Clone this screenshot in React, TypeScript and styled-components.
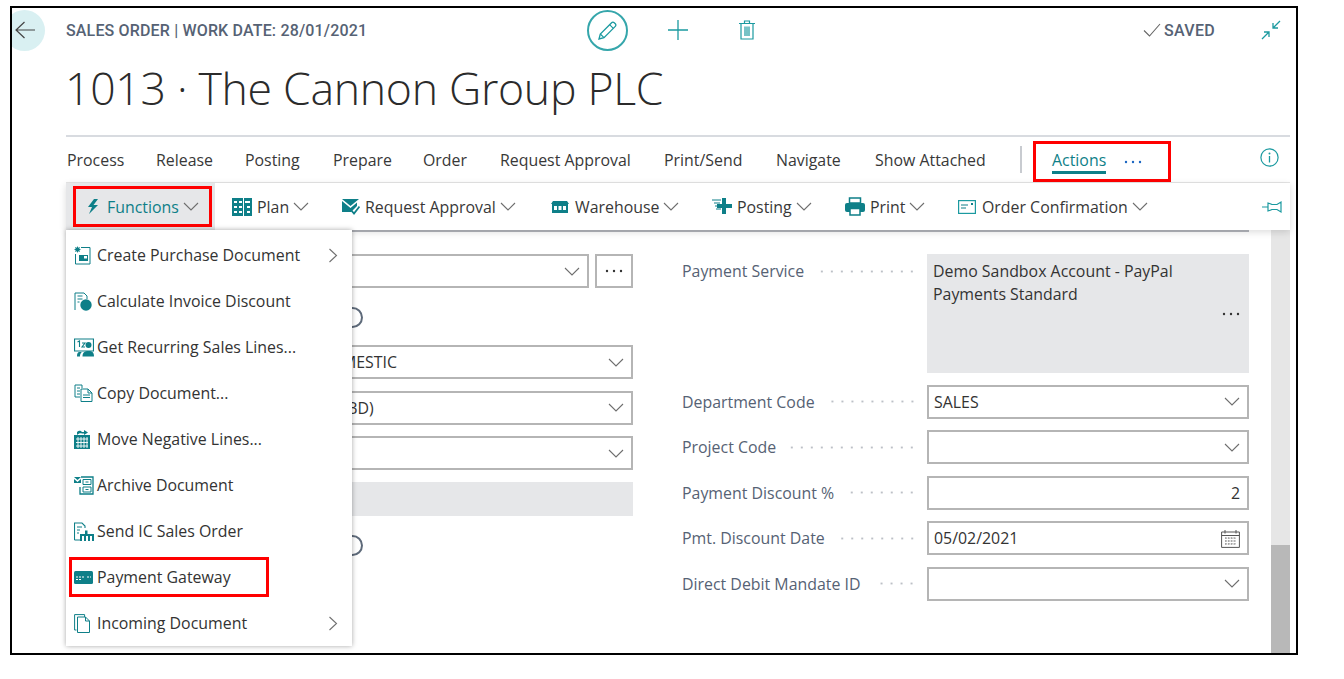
import * as React from 'react'
import styled, { createGlobalStyle } from 'styled-components'

const teal = '#0e7f88'
const lightTeal = '#1b9aa0'

const GlobalStyle = createGlobalStyle`
  html, body {
    margin: 0;
    padding: 0;
    background: #fff;
    font-family: "Open Sans", "Noto Sans", Arial, sans-serif;
    color: #333;
  }
  * { box-sizing: border-box; }
`

const Frame = styled.div`
  width: 1288px;
  height: 649px;
  margin: 6px 0 0 10px;
  border: 2px solid #000;
  overflow: hidden;
  display: flex;
  flex-direction: column;
`

const TopRow = styled.div`
  display: flex;
  align-items: center;
  height: 44px;
  flex: none;
  padding-right: 15px;
`

const BackButton = styled.div`
  width: 41px;
  height: 41px;
  border-radius: 50%;
  background: #d9f0f2;
  margin-left: -8px;
  margin-right: 21px;
  display: flex;
  align-items: center;
  justify-content: center;
  flex: none;
`

const Caption = styled.div`
  width: 300px;
  font-family: Roboto, "Open Sans", sans-serif;
  font-weight: 500;
  font-size: 16px;
  letter-spacing: 0.16px;
  color: #566274;
  white-space: nowrap;
`

const ActionGroup = styled.div`
  display: flex;
  align-items: center;
  margin-left: 221px;
`

const EditCircle = styled.div`
  width: 41px;
  height: 41px;
  border-radius: 50%;
  border: 2px solid #35a6ab;
  display: flex;
  align-items: center;
  justify-content: center;
  margin-right: 40px;
`

const TrashSlot = styled.div`
  display: flex;
  margin-left: 51px;
`

const SavedGroup = styled.div`
  display: flex;
  align-items: center;
  margin-left: auto;
  gap: 3px;
  color: #566274;
  font-family: Roboto, "Open Sans", sans-serif;
  font-weight: 500;
  font-size: 16px;
  letter-spacing: 0.3px;
`

const CheckSlot = styled.div`
  display: flex;
`

const CollapseSlot = styled.div`
  display: flex;
  margin-left: 43px;
`

const Title = styled.h1`
  height: 83px;
  flex: none;
  margin: 0;
  padding: 0 0 12px 53px;
  display: flex;
  align-items: center;
  font-weight: 300;
  font-size: 44.6px;
  letter-spacing: -0.3px;
  color: #2b2b2b;
  white-space: nowrap;
`

const Lower = styled.div`
  flex: 1;
  min-height: 0;
  display: flex;
  flex-direction: column;
  margin-left: 54px;
  margin-right: 6px;
`

const TabBar = styled.div`
  height: 48px;
  flex: none;
  border-top: 2px solid #d8dbe0;
  border-bottom: 1px solid #e6e6e6;
  display: flex;
  align-items: center;
  padding-left: 1px;
  font-size: 15.9px;
`

const Tab = styled.span<{ $width: number }>`
  width: ${p => p.$width}px;
  flex: none;
  white-space: nowrap;
  color: #383838;
`

const TabDivider = styled.div`
  width: 2px;
  height: 27px;
  background: #c8cbd0;
  flex: none;
`

const ActionsBox = styled.div`
  width: 138px;
  height: 41px;
  margin-left: 11px;
  align-self: flex-end;
  border: 3px solid #f00;
  display: flex;
  align-items: center;
  padding-left: 16px;
  flex: none;
`

const ActionsLabel = styled.span`
  color: ${teal};
  border-bottom: 3px solid ${teal};
  line-height: 21px;
  padding-top: 1px;
  margin-right: 18px;
`

const InfoSlot = styled.div`
  margin-left: auto;
  margin-right: 11px;
  margin-bottom: 4px;
  display: flex;
`

const Toolbar = styled.div`
  height: 47px;
  flex: none;
  background: #fff;
  position: relative;
  z-index: 2;
  box-shadow: 0 2px 7px rgba(0, 0, 0, 0.14);
  display: flex;
  align-items: center;
  font-size: 15.9px;
`

const FunctionsButton = styled.div`
  position: relative;
  width: 149px;
  height: 47px;
  margin-right: 17px;
  padding-left: 21px;
  background: #e6e7e9;
  display: flex;
  align-items: center;
  color: ${teal};
  flex: none;
`

const RedBox = styled.div`
  position: absolute;
  left: 7px;
  top: 3px;
  width: 139px;
  height: 41px;
  border: 3px solid #f00;
`

const ToolItem = styled.div<{ $width?: number }>`
  display: flex;
  align-items: center;
  width: ${p => (p.$width ? `${p.$width}px` : 'auto')};
  white-space: nowrap;
  color: #383838;
  flex: none;
`

const ToolLabel = styled.span<{ $iconGap: number }>`
  margin-left: ${p => p.$iconGap}px;
  margin-right: 4px;
`

const PinSlot = styled.div`
  margin-left: auto;
  margin-right: 8px;
  display: flex;
`

const Body = styled.div`
  position: relative;
  flex: 1;
  min-height: 0;
  display: flex;
`

const FormArea = styled.div`
  width: 1183px;
  flex: none;
  border-top: 2px solid #b4b6bc;
  padding-top: 22px;
  display: grid;
  grid-template-columns: 567px 567px;
  column-gap: 49px;
  align-items: start;
`

const FormColumn = styled.div`
  display: flex;
  flex-direction: column;
  gap: 11.5px;
`

const Row = styled.div<{ $tall?: boolean }>`
  display: grid;
  grid-template-columns: 245px 322px;
  align-items: ${p => (p.$tall ? 'start' : 'center')};
  min-height: 34px;
`

const Label = styled.div`
  display: flex;
  align-items: center;
  height: 34px;
  padding-right: 10px;
  font-size: 15.9px;
  color: #566274;
  white-space: nowrap;
`

const Leader = styled.span`
  flex: 1;
  height: 3px;
  margin-left: 14px;
  background-image: radial-gradient(circle, #bcc0c6 1px, transparent 1.2px);
  background-size: 10px 3px;
  background-position: right center;
`

const Field = styled.div<{ $align?: string }>`
  height: 34px;
  border: 2px solid #b5b5b5;
  display: flex;
  align-items: center;
  justify-content: ${p => p.$align ?? 'space-between'};
  padding: 0 7px 0 5px;
  font-size: 15.9px;
  color: #333;
  background: #fff;
`

const FieldWithButton = styled.div`
  display: grid;
  grid-template-columns: 1fr 38px;
  column-gap: 6px;
`

const EllipsisButton = styled.div`
  height: 34px;
  border: 2px solid #b5b5b5;
  display: flex;
  align-items: center;
  justify-content: center;
`

const ReadOnly = styled.div<{ $tall?: boolean }>`
  height: ${p => (p.$tall ? 119 : 34)}px;
  background: #e6e7e9;
  padding: 6px 6px;
  position: relative;
  font-size: 15.9px;
  line-height: 23px;
  color: #333;
`

const ReadOnlyDots = styled.div`
  position: absolute;
  right: 9px;
  top: 58px;
  display: flex;
`

const ToggleRow = styled.div`
  height: 34px;
  display: flex;
  align-items: center;
`

const Toggle = styled.div`
  width: 21px;
  height: 21px;
  margin-top: 2px;
  border-radius: 50%;
  border: 2px solid #5e6a7a;
  margin-left: 31px;
`

const Scrollbar = styled.div`
  width: 19px;
  flex: none;
  margin-left: 22px;
  background: #e6e6e6;
  display: flex;
  flex-direction: column;
  justify-content: flex-end;
`

const ScrollThumb = styled.div`
  height: 108px;
  background: #b8b8b8;
`

const Menu = styled.div`
  position: absolute;
  left: 0;
  top: 0;
  z-index: 3;
  width: 286px;
  height: 416px;
  padding-top: 2px;
  background: #fff;
  box-shadow: 0 0 5px rgba(0, 0, 0, 0.35);
`

const MenuItem = styled.div`
  position: relative;
  height: 46px;
  padding-left: 8px;
  display: flex;
  align-items: center;
  font-size: 15.9px;
  color: #333;
  white-space: nowrap;
`

const MenuIconSlot = styled.div`
  width: 23px;
  flex: none;
  display: flex;
`

const MenuArrow = styled.div`
  margin-left: auto;
  margin-right: 14px;
  display: flex;
`

const MenuRedBox = styled.div`
  position: absolute;
  left: 3px;
  top: 3px;
  width: 200px;
  height: 40px;
  border: 3px solid #f00;
`

const Svg = ({ w, h, vb, children }: { w: number; h: number; vb?: string; children: React.ReactNode }) => (
  <svg width={w} height={h} viewBox={vb ?? `0 0 ${w} ${h}`} fill="none">{children}</svg>
)

const Chevron = ({ size = 16, color = '#6e6e6e' }: { size?: number; color?: string }) => (
  <Svg w={size} h={9} vb="0 0 16 9">
    <path d="M1 1l7 7 7-7" stroke={color} strokeWidth="1.1" />
  </Svg>
)

const ArrowRight = () => (
  <Svg w={10} h={15}>
    <path d="M1.5 1l7 6.5-7 6.5" stroke="#707070" strokeWidth="1.1" />
  </Svg>
)

const Dots = ({ color = '#333' }: { color?: string }) => (
  <Svg w={18} h={4}>
    <circle cx="2" cy="2" r="1.2" fill={color} />
    <circle cx="9" cy="2" r="1.2" fill={color} />
    <circle cx="16" cy="2" r="1.2" fill={color} />
  </Svg>
)

const BackArrow = () => (
  <Svg w={20} h={18}>
    <path d="M20 9H1M9.5 1L1 9l8.5 8" stroke="#444" strokeWidth="1.2" />
  </Svg>
)

const PencilIcon = () => (
  <Svg w={21} h={21}>
    <path d="M2 19l1.3-5L14.6 2.7a1.8 1.8 0 012.6 0l1.1 1.1a1.8 1.8 0 010 2.6L7 17.7 2 19z" stroke={lightTeal} strokeWidth="1.3" />
    <path d="M12.6 4.7l3.7 3.7M3.3 14l3.7 3.7" stroke={lightTeal} strokeWidth="1.2" />
  </Svg>
)

const PlusIcon = () => (
  <Svg w={20} h={20}>
    <path d="M10 0v20M0 10h20" stroke={lightTeal} strokeWidth="1.3" />
  </Svg>
)

const TrashIcon = () => (
  <Svg w={16} h={20}>
    <path d="M0 3.5h16M5.5 3.5V1h5v2.5M2 3.5v15.5h12V3.5M6 6.5v9.5M8 6.5v9.5M10 6.5v9.5" stroke={lightTeal} strokeWidth="1.2" />
  </Svg>
)

const CheckIcon = () => (
  <Svg w={18} h={14}>
    <path d="M1 7.5l5.5 5.5L17 1" stroke="#666" strokeWidth="1.1" />
  </Svg>
)

const CollapseIcon = () => (
  <Svg w={20} h={20}>
    <path d="M19 1l-7 7M12 3v5h5M1 19l7-7M3 12h5v5" stroke={lightTeal} strokeWidth="1.3" />
  </Svg>
)

const InfoIcon = () => (
  <Svg w={19} h={19}>
    <circle cx="9.5" cy="9.5" r="8.6" stroke={lightTeal} strokeWidth="1.2" />
    <path d="M9.5 8v6.5" stroke={lightTeal} strokeWidth="1.3" />
    <circle cx="9.5" cy="5.5" r="1" fill={lightTeal} />
  </Svg>
)

const PinIcon = () => (
  <Svg w={20} h={14}>
    <path d="M0 7h6M6 3l4 1.5h5L19 2v10l-4-2.5h-5L6 11z" stroke={lightTeal} strokeWidth="1.2" />
  </Svg>
)

const BoltIcon = () => (
  <Svg w={12} h={15}>
    <path d="M7 0L1 8h4l-3 7 9-9H6.5L11 0z" fill={teal} />
  </Svg>
)

const PlanIcon = () => (
  <Svg w={20} h={18}>
    <rect width="20" height="18" fill={teal} />
    <path d="M2 3h3v2H2zM7 3h3v2H7zM13 3h5v2h-5zM2 8h3v2H2zM7 8h3v2H7zM15 8h3v2h-3zM2 13h3v2H2zM7 13h3v2H7zM15 13h3v2h-3z" fill="#fff" />
    <path d="M11.5 0v18" stroke="#fff" />
  </Svg>
)

const ApprovalIcon = () => (
  <Svg w={18} h={16}>
    <path d="M0 0h17L8.500 7z" fill={teal} />
    <path d="M0 2l8.500 7L15 3.500V7l-6 6H0z" fill={teal} />
    <path d="M9 11l3 3.500 5.500-7" stroke={teal} strokeWidth="1.8" />
  </Svg>
)

const WarehouseIcon = () => (
  <Svg w={18} h={12}>
    <path d="M2 0h14l2 3H0z" fill={teal} />
    <path d="M1 3h16v9H1z" fill={teal} />
    <path d="M3 5h3v4H3zM7.5 5h3v4h-3zM12 5h3v4h-3z" fill="#fff" />
  </Svg>
)

const PostingIcon = () => (
  <Svg w={20} h={17}>
    <path d="M10 0h4v6h6v4h-6v6h-4v-6H5V6h5z" fill={teal} />
    <path d="M0 2h9M2 5h6M3 8h2M4 11h5" stroke={teal} />
  </Svg>
)

const PrintIcon = () => (
  <Svg w={20} h={19}>
    <path d="M4.5 1h11v5h-11z" stroke={teal} strokeWidth="1.5" />
    <rect y="6" width="20" height="9" rx="2" fill={teal} />
    <path d="M5 11.5h10V18H5z" fill="#fff" stroke={teal} strokeWidth="1.5" />
  </Svg>
)

const ConfirmIcon = () => (
  <Svg w={18} h={14}>
    <rect x=".6" y=".6" width="16.8" height="12.8" stroke={lightTeal} strokeWidth="1.2" />
    <path d="M3 5h7M3 8h5" stroke={teal} />
    <rect x="13" y="3" width="2" height="2" fill={teal} />
  </Svg>
)

const CalendarIcon = () => (
  <Svg w={19} h={19}>
    <path d="M.6 3h17.8v15.4H.6zM.6 6.5h17.8M4 1v3.5M15 1v3.5" stroke="#555" strokeWidth="1" />
    <path d="M4 9h11M4 12h11M4 15h11M5 8.5v8M8 8.5v8M11 8.5v8M14 8.5v8" stroke="#777" strokeWidth=".9" strokeDasharray="1.4 1.4" />
  </Svg>
)

const MenuCreate = () => (
  <Svg w={17} h={19}>
    <path d="M7 1.5h9V18H1.500V8" stroke={teal} />
    <path d="M3.500 0l.7 1.700 1.800-.7-.7 1.800L7 3.500l-1.700.7.7 1.800-1.800-.7L3.500 7l-.7-1.700-1.800.7.7-1.800L0 3.500l1.700-.7L1 1l1.800.7z" fill={teal} />
    <path d="M5 9h9v6H5z" fill={teal} />
    <path d="M10 10h3v2.500h-3z" fill="#fff" />
  </Svg>
)

const MenuCalc = () => (
  <Svg w={18} h={19}>
    <path d="M1 18V1h9l3 3v3" stroke={teal} />
    <path d="M3.500 4h5M3.500 7h5M3.500 10h2" stroke={teal} />
    <circle cx="12" cy="13" r="5.700" fill={teal} />
  </Svg>
)

const MenuRecurring = () => (
  <Svg w={20} h={19}>
    <path d="M.5 1h19v12H.500z" stroke={teal} strokeWidth="1.2" />
    <path d="M3.500 4l2-1v6M8 5h3L8 9h3" stroke={teal} strokeWidth="1.100" />
    <circle cx="14.500" cy="7" r="3" fill={teal} />
    <path d="M8.500 18.500c0-4 2-5.500 6-5.500s5.500 1.500 5.500 5.500zM6 18.500c0-2 .5-3.500 2-4.500h-3c-1.500.5-2 2-2 4.500z" fill={teal} />
  </Svg>
)

const MenuCopy = () => (
  <Svg w={19} h={18}>
    <path d="M8 4V1H1v12h5" stroke={teal} />
    <path d="M7 5h7l4 4v8.500H7zM14 5v4h4M9 11h7M9 13.500h7M3 4h3M3 7h3M3 10h3" stroke={teal} />
  </Svg>
)

const MenuMove = () => (
  <Svg w={16} h={19}>
    <path d="M3 2c2-2 4-1 5 0h2V0l4 2.500-4 2.500V3.500H8C6.500 3 5 3 3 5z" fill={teal} />
    <rect y="5" width="16" height="14" fill={teal} />
    <path d="M2 9h12M2 12.500h12M2 16h12M4 7v11M7 7v11M10 7v11M13 7v11" stroke="#fff" strokeWidth=".9" />
  </Svg>
)

const MenuArchive = () => (
  <Svg w={20} h={19}>
    <path d="M0 1h7L3.500 4z" fill={teal} />
    <path d="M0 3l3.500 3L7 3v4H0z" fill={teal} />
    <path d="M7 1h12v17H6v-7" stroke={teal} strokeWidth="1.300" />
    <path d="M9 3.500h8v5H9zM9 11h8v5H9z" stroke={teal} />
    <path d="M11.500 6h3M11.500 13.500h3" stroke={teal} />
  </Svg>
)

const MenuSend = () => (
  <Svg w={20} h={19}>
    <path d="M.5 18V1H8l3 3v2M.5 18h6" stroke={teal} strokeWidth="1.100" />
    <path d="M3 5h5M3 8h3M3 11h2" stroke={teal} />
    <path d="M6 19v-7h5V8.500h2.500V12H20v7z" fill={teal} />
    <path d="M8 14h2v5H8zM12 14h2v5h-2zM16 14h2v5h-2z" fill="#fff" />
  </Svg>
)

const MenuCard = () => (
  <Svg w={19} h={13}>
    <rect width="19" height="13" rx="1.500" fill={teal} />
    <path d="M2 6h9M13 6h4" stroke="#fff" strokeDasharray="2 1" />
    <path d="M2 8.500h6" stroke="#fff" strokeDasharray="2 1" />
  </Svg>
)

const MenuIncoming = () => (
  <Svg w={16} h={19}>
    <path d="M2.500 16H.6V.6h10V3" stroke={teal} />
    <path d="M3.500 3h8l4 4v11.500h-12zM11.500 3v4h4" stroke={teal} />
  </Svg>
)

const tabs = [
  { name: 'Process', width: 89 },
  { name: 'Release', width: 89 },
  { name: 'Posting', width: 88 },
  { name: 'Prepare', width: 90 },
  { name: 'Order', width: 77 },
  { name: 'Request Approval', width: 164 },
  { name: 'Print/Send', width: 112 },
  { name: 'Navigate', width: 99 },
  { name: 'Show Attached', width: 145 },
]

const tools = [
  { name: 'Plan', icon: <PlanIcon />, gap: 5, width: 110 },
  { name: 'Request Approval', icon: <ApprovalIcon />, gap: 5, width: 209 },
  { name: 'Warehouse', icon: <WarehouseIcon />, gap: 6, width: 161 },
  { name: 'Posting', icon: <PostingIcon />, gap: 5, width: 133 },
  { name: 'Print', icon: <PrintIcon />, gap: 5, width: 113 },
  { name: 'Order Confirmation', icon: <ConfirmIcon />, gap: 6 },
]

const menuItems = [
  { name: 'Create Purchase Document', icon: <MenuCreate />, sub: true },
  { name: 'Calculate Invoice Discount', icon: <MenuCalc /> },
  { name: 'Get Recurring Sales Lines...', icon: <MenuRecurring /> },
  { name: 'Copy Document...', icon: <MenuCopy /> },
  { name: 'Move Negative Lines...', icon: <MenuMove /> },
  { name: 'Archive Document', icon: <MenuArchive /> },
  { name: 'Send IC Sales Order', icon: <MenuSend /> },
  { name: 'Payment Gateway', icon: <MenuCard />, marked: true },
  { name: 'Incoming Document', icon: <MenuIncoming />, sub: true },
]

const FieldRow = ({ label, children }: { label: string; children: React.ReactNode }) => (
  <Row>
    <Label>{label}<Leader /></Label>
    {children}
  </Row>
)

const App = () => (
  <>
    <GlobalStyle />
    <Frame>
      <TopRow>
        <BackButton><BackArrow /></BackButton>
        <Caption>SALES ORDER | WORK DATE: 28/01/2021</Caption>
        <ActionGroup>
          <EditCircle><PencilIcon /></EditCircle>
          <PlusIcon />
          <TrashSlot><TrashIcon /></TrashSlot>
        </ActionGroup>
        <SavedGroup>
          <CheckSlot><CheckIcon /></CheckSlot>
          SAVED
          <CollapseSlot><CollapseIcon /></CollapseSlot>
        </SavedGroup>
      </TopRow>
      <Title>1013 · The Cannon Group PLC</Title>
      <Lower>
        <TabBar>
          {tabs.map(t => <Tab key={t.name} $width={t.width}>{t.name}</Tab>)}
          <TabDivider />
          <ActionsBox>
            <ActionsLabel>Actions</ActionsLabel>
            <Dots color="#1a66c2" />
          </ActionsBox>
          <InfoSlot><InfoIcon /></InfoSlot>
        </TabBar>
        <Toolbar>
          <FunctionsButton>
            <BoltIcon />
            <ToolLabel $iconGap={8}>Functions</ToolLabel>
            <Chevron />
            <RedBox />
          </FunctionsButton>
          {tools.map(t => (
            <ToolItem key={t.name} $width={t.width}>
              {t.icon}
              <ToolLabel $iconGap={t.gap}>{t.name}</ToolLabel>
              <Chevron />
            </ToolItem>
          ))}
          <PinSlot><PinIcon /></PinSlot>
        </Toolbar>
        <Body>
          <FormArea>
            <FormColumn>
              <Row>
                <Label />
                <FieldWithButton>
                  <Field $align="flex-end"><Chevron /></Field>
                  <EllipsisButton><Dots /></EllipsisButton>
                </FieldWithButton>
              </Row>
              <Row><Label /><ToggleRow><Toggle /></ToggleRow></Row>
              <Row><Label /><Field>DOMESTIC<Chevron /></Field></Row>
              <Row><Label /><Field>EU (BD)<Chevron /></Field></Row>
              <Row><Label /><Field $align="flex-end"><Chevron /></Field></Row>
              <Row><Label /><ReadOnly /></Row>
              <Row><Label /><ToggleRow><Toggle /></ToggleRow></Row>
            </FormColumn>
            <FormColumn>
              <Row $tall>
                <Label>Payment Service<Leader /></Label>
                <ReadOnly $tall>
                  Demo Sandbox Account - PayPal
                  <br />
                  Payments Standard
                  <ReadOnlyDots><Dots /></ReadOnlyDots>
                </ReadOnly>
              </Row>
              <FieldRow label="Department Code"><Field>SALES<Chevron /></Field></FieldRow>
              <FieldRow label="Project Code"><Field $align="flex-end"><Chevron /></Field></FieldRow>
              <FieldRow label="Payment Discount %"><Field $align="flex-end">2</Field></FieldRow>
              <FieldRow label="Pmt. Discount Date"><Field>05/02/2021<CalendarIcon /></Field></FieldRow>
              <FieldRow label="Direct Debit Mandate ID"><Field $align="flex-end"><Chevron /></Field></FieldRow>
            </FormColumn>
          </FormArea>
          <Scrollbar><ScrollThumb /></Scrollbar>
          <Menu>
            {menuItems.map(m => (
              <MenuItem key={m.name}>
                <MenuIconSlot>{m.icon}</MenuIconSlot>
                {m.name}
                {m.sub && <MenuArrow><ArrowRight /></MenuArrow>}
                {m.marked && <MenuRedBox />}
              </MenuItem>
            ))}
          </Menu>
        </Body>
      </Lower>
    </Frame>
  </>
)

export default App
